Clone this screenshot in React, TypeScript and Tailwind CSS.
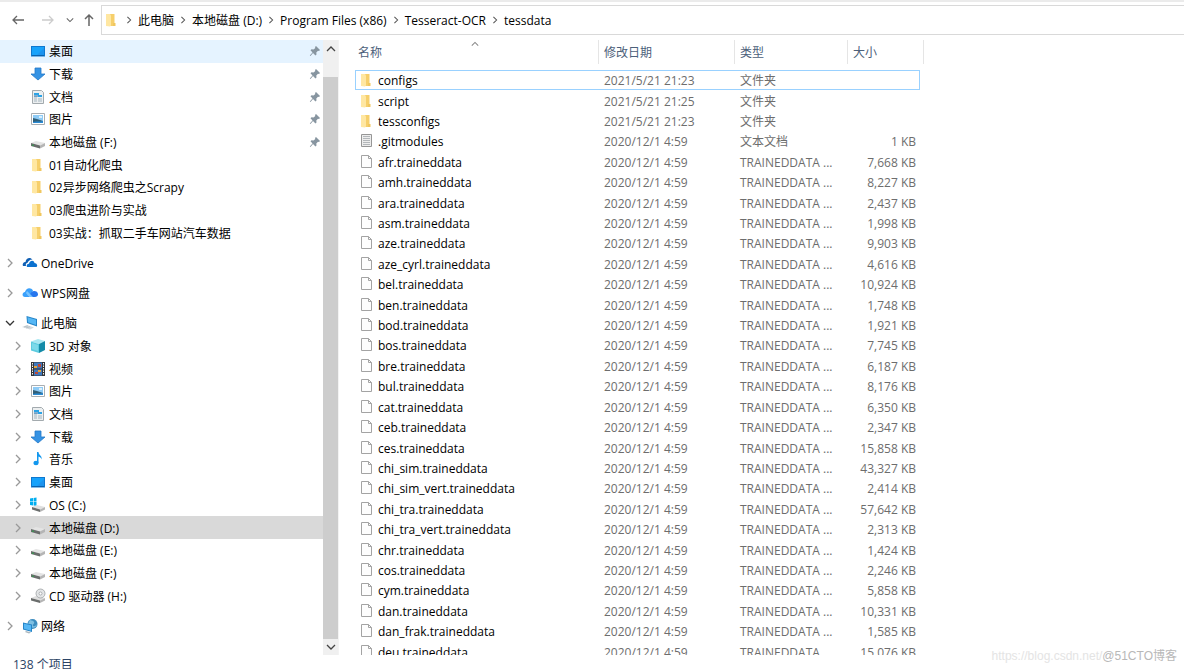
import type { ReactNode } from 'react';

type IconName =
  | 'desktop' | 'download' | 'document' | 'picture' | 'disk' | 'system' | 'folder' | 'onedrive'
  | 'wps' | 'computer' | 'cube' | 'video' | 'music' | 'cd' | 'network' | 'text' | 'blank';

const icons: Record<IconName, ReactNode> = {
  desktop: (
    <>
      <path d="M1 3h14v10.500H1z" fill="#0f78cf" />
      <path d="M2 4h12v8H2z" fill="#17a2fb" />
      <path d="M7 12l7-7v7z" fill="#1d93ee" />
      <path d="M2 12h12v1H2z" fill="#0b62ad" />
    </>
  ),
  download: <path d="M5 2h6v6h4l-7 6-7-6h4z" fill="#3593e4" stroke="#2478c8" strokeWidth=".8" />,
  document: (
    <>
      <path d="M2.500 1.500h9l2 2v11h-11z" fill="#eceff0" stroke="#a3aaae" />
      <path d="M4 4h5v2H4zM8 6h4v2H8z" fill="#2ba3e6" />
      <path d="M4 8h3M4 10h3M4 12h3M8 10h4M8 12h4" stroke="#a5b5bf" />
      <path d="M4 7h4" stroke="#1c6fb1" />
    </>
  ),
  picture: (
    <>
      <path d="M1.500 2.500h13v11h-13z" fill="#fff" stroke="#a9aeb2" />
      <path d="M3 4h10v8H3z" fill="#8ecbf6" />
      <path d="M3 7l4 1 6 2v2H3z" fill="#315f78" />
      <path d="M3 11c4-1 7 0 10-1v2H3z" fill="#2b8bd4" />
      <path d="M9 5h3v2H9z" fill="#d9effc" />
    </>
  ),
  disk: (
    <>
      <path d="M1 9l5-2 9 2-5 2.500z" fill="#e4e4e4" />
      <path d="M1 9l9 2.500v3L1 12z" fill="#6a6d6c" />
      <path d="M10 11.500L15 9v3l-5 2.500z" fill="#b5b5b5" />
      <path d="M2 10.500h2v1.500H2z" fill="#3f8f55" />
    </>
  ),
  system: (
    <>
      <path d="M0 1.500L3 1v3.500H0zM3.600 1L6.500.600v3.900H3.600zM0 5.100h3v3.400l-3-.4zM3.600 5.100h2.900V9l-2.900-.5z" fill="#00adef" />
      <path d="M2 10l5-2 8 2-5 2.500z" fill="#e0e0e0" />
      <path d="M2 10l8 2.500V15l-8-2.500z" fill="#6a6d6c" />
      <path d="M10 12.500l5-2.500v2.500L10 15z" fill="#b5b5b5" />
    </>
  ),
  folder: (
    <>
      <path d="M2 2h8.500v12H2z" fill="#f6cf6b" />
      <path d="M2 2h4l1 1.500v10L6 14.500 2 14z" fill="#ffe7a2" />
      <path d="M9 11h2.500v3H9z" fill="#f0c75f" />
    </>
  ),
  onedrive: (
    <>
      <path d="M1 11C0 8.500 2 7 3.500 7 4 3 8 1.500 10.500 4.500 7.500 4.500 6 6.500 5.600 7.800 4 8 3.500 9.500 4 11z" fill="#0f5fb4" />
      <path d="M5 12c-1-2 .5-3.500 2-3.300C8 5 12 5 12.500 8 15 8 16 11 14.500 12z" fill="#0c71cf" />
    </>
  ),
  wps: (
    <>
      <path d="M3 12C-.500 11.500 0 7.500 3 7 4 2.500 9 2 11 5.500L7 12z" fill="#3aa0fb" />
      <path d="M6 12l3.500-5c2-2 6.500-1 6.500 2.300 0 1.700-1.500 2.700-3 2.700z" fill="#2676ee" />
      <path d="M5 6l6 6H7L4 8z" fill="#79c4ff" />
    </>
  ),
  computer: (
    <>
      <path d="M4.500 1l10.500 3v7.500L5 8z" fill="#2584c7" />
      <path d="M5.500 2.300L14 4.800v5.200L6 7.300z" fill="#55b7f5" />
      <path d="M0 12l5-2 7 2.500-4 2z" fill="#d3d9dd" />
      <path d="M2 12l4-1.200M4 13l4-1.300" stroke="#a5b0b8" strokeWidth=".6" />
    </>
  ),
  cube: (
    <>
      <path d="M1 3.500L8 1l7 2-6 3z" fill="#a8e7f2" />
      <path d="M1 3.500L9 6v9l-8-2.500z" fill="#5ccbdf" />
      <path d="M9 6l6-3v9l-6 3z" fill="#148ba8" />
      <path d="M2 5l6 2v6l-6-2z" fill="#7bd9e9" />
    </>
  ),
  video: (
    <>
      <path d="M1 1h14v14H1z" fill="#343638" />
      <path d="M4 1.500h8v6H4zM4 8.500h8v6H4z" fill="#3f79bf" />
      <path d="M4 5h3v2H4zM8 9h3v2H8z" fill="#e7a53a" />
      <path d="M8 3h3v3H8zM5 11h3v2H5z" fill="#bd4938" />
      <path d="M2.500 2v12M13.500 2v12" stroke="#f2f2f2" strokeDasharray="1.500 1" />
    </>
  ),
  music: (
    <>
      <path d="M7 1h1.500c0 3 4 3.500 3 7.500-.5-2-1.500-2.500-3-3V12H7z" fill="#1297ee" />
      <ellipse cx="6" cy="12" rx="2.600" ry="2.200" fill="#1297ee" />
    </>
  ),
  cd: (
    <>
      <path d="M1 10l5-2 9 2-5 2.500z" fill="#dedede" />
      <path d="M1 10l9 2.500V15l-9-2.500z" fill="#6a6d6c" />
      <path d="M10 12.500l5-2.500v2.500L10 15z" fill="#b5b5b5" />
      <circle cx="10.500" cy="5.500" r="4.500" fill="#e3e5e6" stroke="#92979a" strokeWidth=".7" />
      <circle cx="10.500" cy="5.500" r="1.500" fill="#fff" stroke="#92979a" strokeWidth=".7" />
    </>
  ),
  network: (
    <>
      <circle cx="10.500" cy="6" r="5" fill="#3d8dbf" />
      <path d="M8 2c2 1 3 0 4 2s-2 2-1 4c2 1 3-1 4-2-1 6-8 4-9 0z" fill="#7fc0e2" />
      <path d="M1 4.500l9 2V14l-9-2.500z" fill="#2584c7" />
      <path d="M2 5.700l7 1.600v5.500l-7-2z" fill="#55b7f5" />
      <path d="M4 13l5 1.500-2 1-4-1.500z" fill="#a9b5bc" />
    </>
  ),
  text: (
    <>
      <path d="M2.500 1.500h10v12h-10z" fill="#ededed" stroke="#969696" />
      <path d="M4 3.500h7M4 5.500h7M4 7.500h7M4 9.500h7M4 11.500h7" stroke="#b3b7ba" />
    </>
  ),
  blank: (
    <>
      <path d="M2.500 1.500h7l3 3v9h-10z" fill="#fdfdfd" stroke="#a3a3a3" />
      <path d="M9.500 1.500v3h3" fill="none" stroke="#a3a3a3" />
    </>
  ),
};

function Icon({ name }: { name: IconName }) {
  return (
    <svg viewBox="0 0 16 16" className="h-4 w-4 shrink-0" aria-hidden="true">
      {icons[name]}
    </svg>
  );
}

function Chevron({ className }: { className: string }) {
  return (
    <svg viewBox="0 0 10 10" className={className} fill="none" stroke="currentColor" strokeWidth="1.3" aria-hidden="true">
      <path d="M3 1l4 4-4 4" />
    </svg>
  );
}

function Pin() {
  return (
    <svg viewBox="0 0 12 12" className="h-3 w-3 text-[#8795a0]" fill="currentColor" aria-hidden="true">
      <path d="M7 1l4 4-1 1-1-.3L7.300 7.500l.2 2-1 1L4 8 1.500 11l-.7-.5L3.500 7.500 1.500 5.300l1-1 2 .3L6.300 3 6 2z" />
    </svg>
  );
}

interface Place {
  icon: IconName;
  name: string;
  pinned?: boolean;
}

const quickAccess: Place[] = [
  { icon: 'desktop', name: '桌面', pinned: true },
  { icon: 'download', name: '下载', pinned: true },
  { icon: 'document', name: '文档', pinned: true },
  { icon: 'picture', name: '图片', pinned: true },
  { icon: 'disk', name: '本地磁盘 (F:)', pinned: true },
  { icon: 'folder', name: '01自动化爬虫' },
  { icon: 'folder', name: '02异步网络爬虫之Scrapy' },
  { icon: 'folder', name: '03爬虫进阶与实战' },
  { icon: 'folder', name: '03实战：抓取二手车网站汽车数据' },
];

const computerItems: Place[] = [
  { icon: 'cube', name: '3D 对象' },
  { icon: 'video', name: '视频' },
  { icon: 'picture', name: '图片' },
  { icon: 'document', name: '文档' },
  { icon: 'download', name: '下载' },
  { icon: 'music', name: '音乐' },
  { icon: 'desktop', name: '桌面' },
  { icon: 'system', name: 'OS (C:)' },
  { icon: 'disk', name: '本地磁盘 (D:)' },
  { icon: 'disk', name: '本地磁盘 (E:)' },
  { icon: 'disk', name: '本地磁盘 (F:)' },
  { icon: 'cd', name: 'CD 驱动器 (H:)' },
];

const crumbs = ['此电脑', '本地磁盘 (D:)', 'Program Files (x86)', 'Tesseract-OCR', 'tessdata'];

// name, size in KB
const trained: [string, string][] = [
  ['afr', '7,668'],
  ['amh', '8,227'],
  ['ara', '2,437'],
  ['asm', '1,998'],
  ['aze', '9,903'],
  ['aze_cyrl', '4,616'],
  ['bel', '10,924'],
  ['ben', '1,748'],
  ['bod', '1,921'],
  ['bos', '7,745'],
  ['bre', '6,187'],
  ['bul', '8,176'],
  ['cat', '6,350'],
  ['ceb', '2,347'],
  ['ces', '15,858'],
  ['chi_sim', '43,327'],
  ['chi_sim_vert', '2,414'],
  ['chi_tra', '57,642'],
  ['chi_tra_vert', '2,313'],
  ['chr', '1,424'],
  ['cos', '2,246'],
  ['cym', '5,858'],
  ['dan', '10,331'],
  ['dan_frak', '1,585'],
  ['deu', '15,076'],
];

const files: { icon: IconName; name: string; date: string; type: string; size: string }[] = [
  { icon: 'folder', name: 'configs', date: '2021/5/21 21:23', type: '文件夹', size: '' },
  { icon: 'folder', name: 'script', date: '2021/5/21 21:25', type: '文件夹', size: '' },
  { icon: 'folder', name: 'tessconfigs', date: '2021/5/21 21:23', type: '文件夹', size: '' },
  { icon: 'text', name: '.gitmodules', date: '2020/12/1 4:59', type: '文本文档', size: '1 KB' },
  ...trained.map(([lang, kb]) => ({
    icon: 'blank' as IconName,
    name: `${lang}.traineddata`,
    date: '2020/12/1 4:59',
    type: 'TRAINEDDATA ...',
    size: `${kb} KB`,
  })),
];

function RootItem({ icon, name, open }: { icon: IconName; name: string; open?: boolean }) {
  return (
    <div className="flex h-full items-center pl-[5px]">
      <button aria-label={name} className={open ? 'rotate-90 text-[#333]' : 'text-[#999]'}>
        <Chevron className="h-2.5 w-2.5" />
      </button>
      <a href="#" className="ml-[7px] flex items-center gap-[3px]">
        <Icon name={icon} />
        <span className="pt-0.5">{name}</span>
      </a>
    </div>
  );
}

function Sidebar() {
  return (
    <nav className="w-[323px] shrink-0 overflow-hidden">
      <ul className="grid h-[204px] auto-rows-fr">
        {quickAccess.map((p, i) => (
          <li key={p.name} className={i === 0 ? 'bg-[#e5f3ff]' : ''}>
            <a href="#" className="flex h-full items-center gap-[3px] pr-0.5 pl-[30px]">
              <Icon name={p.icon} />
              <span className="grow pt-0.5">{p.name}</span>
              {p.pinned && <Pin />}
            </a>
          </li>
        ))}
      </ul>
      <div className="mt-2 h-[22px]">
        <RootItem icon="onedrive" name="OneDrive" />
      </div>
      <div className="mt-2 h-[22px]">
        <RootItem icon="wps" name="WPS网盘" />
      </div>
      <ul className="mt-2 grid h-[295px] auto-rows-fr">
        <li>
          <RootItem icon="computer" name="此电脑" open />
        </li>
        {computerItems.map((p) => (
          <li
            key={p.name}
            className={p.name.includes('D:') ? 'flex items-center bg-[#d9d9d9] pl-[13px]' : 'flex items-center pl-[13px]'}
          >
            <button aria-label={p.name} className="text-[#999]">
              <Chevron className="h-2.5 w-2.5" />
            </button>
            <a href="#" className="ml-[7px] flex items-center gap-[3px]">
              <Icon name={p.icon} />
              <span className="pt-0.5">{p.name}</span>
            </a>
          </li>
        ))}
      </ul>
      <div className="mt-2 h-[22px]">
        <RootItem icon="network" name="网络" />
      </div>
    </nav>
  );
}

function ScrollBar() {
  return (
    <div className="flex w-[15px] shrink-0 flex-col bg-[#f0f0f0] text-[#444]">
      <button aria-label="Scroll up" className="flex h-[17px] items-center justify-center">
        <Chevron className="h-2.5 w-2.5 -rotate-90" />
      </button>
      <div className="mt-5 grow bg-[#cdcdcd]" />
      <button aria-label="Scroll down" className="flex h-4 items-center justify-center">
        <Chevron className="h-2.5 w-2.5 rotate-90" />
      </button>
    </div>
  );
}

function AddressBar() {
  return (
    <header className="flex h-10 shrink-0 border-t-2 border-[#ebebeb] pt-[3px] pb-[5px]">
      <div className="flex w-[101px] shrink-0 items-center pl-[11px] text-[#666]">
        <button aria-label="Back">
          <svg viewBox="0 0 14 14" className="h-3.5 w-3.5" fill="none" stroke="currentColor" strokeWidth="1.300">
            <path d="M13 7H2M6 3L2 7l4 4" />
          </svg>
        </button>
        <button aria-label="Forward" className="ml-4 text-[#ccc]">
          <svg viewBox="0 0 14 14" className="h-3.5 w-3.5" fill="none" stroke="currentColor" strokeWidth="1.300">
            <path d="M1 7h11M8 3l4 4-4 4" />
          </svg>
        </button>
        <button aria-label="Recent locations" className="ml-[11px]">
          <Chevron className="h-2 w-2 rotate-90" />
        </button>
        <button aria-label="Up" className="ml-2">
          <svg viewBox="0 0 14 14" className="h-3.5 w-3.5" fill="none" stroke="currentColor" strokeWidth="1.500">
            <path d="M7 13V2M3 6l4-4 4 4" />
          </svg>
        </button>
      </div>
      <nav className="flex grow items-center border border-r-0 border-[#d9d9d9] pl-0.5">
        <Icon name="folder" />
        {crumbs.map((c) => (
          <span key={c} className="flex items-center">
            <Chevron className="mx-[5px] h-2 w-2 text-[#555]" />
            <a href="#" className="pt-px">{c}</a>
          </span>
        ))}
      </nav>
    </header>
  );
}

function FileList() {
  return (
    <main className="min-w-0 grow overflow-hidden border-l border-[#f3f3f3] pl-4">
      <table className="w-[569px] table-fixed border-separate border-spacing-0">
        <colgroup>
          <col className="w-[244px]" />
          <col className="w-[136px]" />
          <col className="w-[113px]" />
          <col className="w-[76px]" />
        </colgroup>
        <thead>
          <tr className="h-6 text-left text-[#4c607a]">
            <th className="relative border-r border-[#e5e5e5] p-0 pt-0.5 pl-[3px] font-normal">
              <button>名称</button>
              <Chevron className="absolute top-0 left-1/2 -ml-1.5 h-2 w-2 -rotate-90 text-[#888]" />
            </th>
            <th className="border-r border-[#e5e5e5] p-0 pt-0.5 pl-[5px] font-normal"><button>修改日期</button></th>
            <th className="border-r border-[#e5e5e5] p-0 pt-0.5 pl-[5px] font-normal"><button>类型</button></th>
            <th className="border-r border-[#e5e5e5] p-0 pt-0.5 pl-[5px] font-normal"><button>大小</button></th>
          </tr>
        </thead>
      </table>
      <table className="mt-1.5 h-[592px] w-[565px] table-fixed border-separate border-spacing-0 text-[#6d6d6d]">
        <colgroup>
          <col className="w-[243px]" />
          <col className="w-[136px]" />
          <col className="w-[113px]" />
          <col className="w-[73px]" />
        </colgroup>
        <tbody>
          {files.map((f, i) => (
            <tr key={f.name} className={i === 0 ? 'outline-1 -outline-offset-1 outline-[#99d1ff]' : ''}>
              <td className="p-0 pl-1 text-black">
                <a href="#" className="flex items-center gap-[3px]">
                  <Icon name={f.icon} />
                  <span className="pt-0.5">{f.name}</span>
                </a>
              </td>
              <td className="p-0 pt-0.5 pl-1.5">{f.date}</td>
              <td className="p-0 pt-0.5 pl-1.5 whitespace-nowrap">{f.type}</td>
              <td className="p-0 pt-0.5 pr-1 text-right whitespace-nowrap">{f.size}</td>
            </tr>
          ))}
        </tbody>
      </table>
    </main>
  );
}

export default function App() {
  return (
    <div className="relative flex h-screen flex-col overflow-hidden bg-white font-['Open_Sans','Noto_Sans_CJK_SC',sans-serif] text-[12px] leading-4 text-black">
      <AddressBar />
      <div className="flex min-h-0 grow">
        <Sidebar />
        <ScrollBar />
        <FileList />
      </div>
      <footer className="h-3.5 shrink-0 overflow-hidden pl-[13px] leading-5 text-[#2b4365]">138 个项目</footer>
      <div className="absolute right-[7px] bottom-[5px] flex font-['Liberation_Sans','Noto_Sans_CJK_SC',sans-serif]">
        <span className="text-[#e4e4e4]">https://blog.csdn.net/</span>
        <span className="text-[#b8b8b8]">@51CTO博客</span>
      </div>
    </div>
  );
}
